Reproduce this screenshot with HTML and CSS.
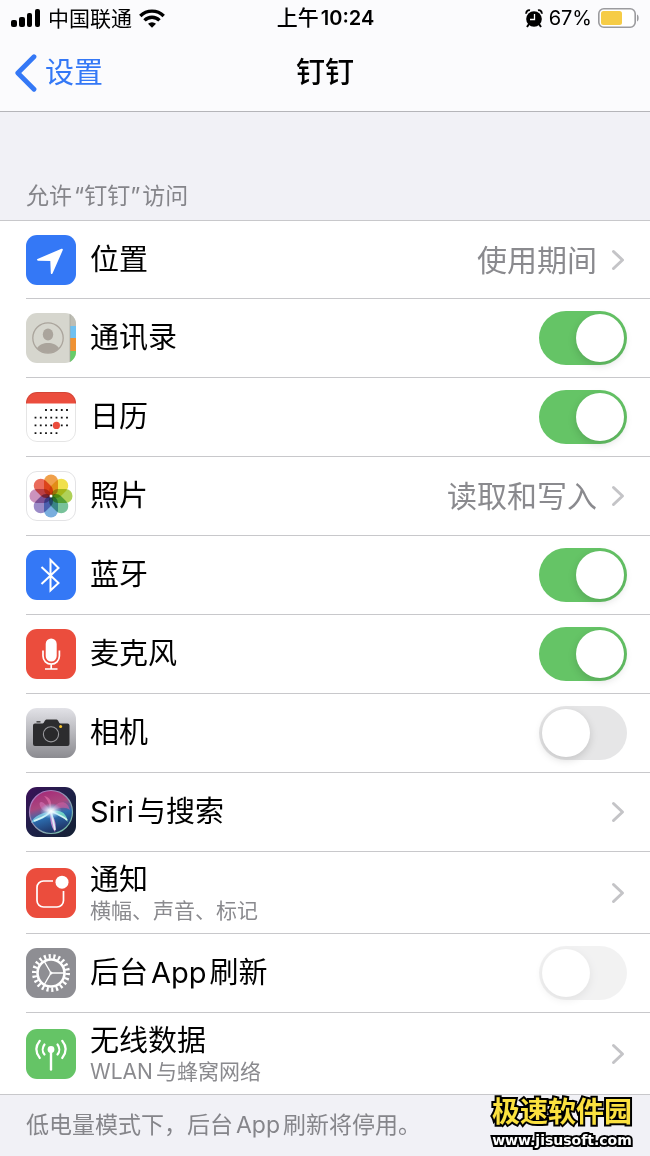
FILE: index.html
```html
<!DOCTYPE html>
<html lang="zh-CN">
<head>
<meta charset="utf-8">
<meta name="viewport" content="width=device-width, initial-scale=1">
<title>钉钉</title>
<link rel="stylesheet" href="styles.css">
</head>
<body>
<svg width="0" height="0" class="defs" aria-hidden="true">
  <defs>
    <clipPath id="tile"><rect width="50" height="50" rx="11"/></clipPath>
    <linearGradient id="silver" x1="0" y1="0" x2="0" y2="1"><stop offset="0" stop-color="#e2e2e7"/><stop offset="1" stop-color="#8b8b90"/></linearGradient>
    <linearGradient id="night" x1="0" y1="0" x2="1" y2="1"><stop offset="0" stop-color="#3b1058"/><stop offset=".5" stop-color="#1d2148"/><stop offset="1" stop-color="#142033"/></linearGradient>
    <linearGradient id="orb" x1=".3" y1="0" x2=".6" y2="1"><stop offset="0" stop-color="#a52a78"/><stop offset=".35" stop-color="#a9487f"/><stop offset=".6" stop-color="#2c6db0"/><stop offset="1" stop-color="#1d2c5c"/></linearGradient>
    <linearGradient id="rim" x1="0" y1="0" x2="1" y2="1"><stop offset="0" stop-color="#b66bc4"/><stop offset="1" stop-color="#6bc6a4"/></linearGradient>
    <radialGradient id="glow"><stop offset="0" stop-color="#fff"/><stop offset=".3" stop-color="#e8f6ff" stop-opacity=".85"/><stop offset="1" stop-color="#7fd0ff" stop-opacity="0"/></radialGradient>
    <symbol id="chevron" viewBox="0 0 16 22"><path d="M2.5 2.500 11.500 11 2.500 19.500" fill="none" stroke="currentColor" stroke-width="3" stroke-linecap="round" stroke-linejoin="round"/></symbol>
  </defs>
</svg>

<header class="top">
  <div class="status">
    <div class="status-left">
      <svg width="30" height="18" viewBox="0 0 30 18" aria-hidden="true"><rect x="0" y="11" width="6" height="7" rx="2"/><rect x="8" y="8" width="6" height="10" rx="2"/><rect x="16" y="4" width="5" height="14" rx="2"/><rect x="24" y="0" width="5" height="18" rx="2"/></svg>
      <span class="carrier">中国联通</span>
      <svg width="26" height="19" viewBox="0 0 26 19" aria-hidden="true"><g fill="none" stroke="#000" stroke-width="3.400"><path d="M1.300 7a16.500 16.500 0 0 1 23.400 0"/><path d="M5.500 11.400a10.600 10.600 0 0 1 15 0"/></g><path d="M9 14.800a5.700 5.700 0 0 1 8 0L13 18.700z"/></svg>
    </div>
    <div class="clock">上午<span class="time">10:24</span></div>
    <div class="status-right">
      <svg width="18" height="19" viewBox="0 0 18 19" aria-hidden="true"><circle cx="9" cy="10" r="7.800"/><path d="M1.300 4.800a3 3 0 0 1 3.700-3.500M16.700 4.800a3 3 0 0 0-3.700-3.500" stroke="#000" stroke-width="1.800" fill="none"/><path d="M4 15l-2 3M14 15l2 3" stroke="#000" stroke-width="2"/><path d="M9.500 5v5.500H5" stroke="#fff" stroke-width="1.300" fill="none"/></svg>
      <span class="percent">67%</span>
      <svg width="42" height="20" viewBox="0 0 42 20" aria-hidden="true"><rect x=".8" y=".8" width="36.400" height="18.400" rx="5" fill="#fff" stroke="#9b9b9e" stroke-width="1.600"/><rect x="3" y="3" width="21" height="14" rx="2.500" fill="#f6cc46"/><path d="M39 6.500c2.200.8 2.200 6.200 0 7z" fill="#9b9b9e"/></svg>
    </div>
  </div>
  <nav class="nav">
    <a class="back" href="#settings"><svg width="22" height="38" viewBox="0 0 22 38" aria-hidden="true"><path d="M19 2.700 2.800 19 19 35.300" fill="none" stroke="currentColor" stroke-width="4.800" stroke-linecap="round" stroke-linejoin="round"/></svg>设置</a>
    <h1 class="title">钉钉</h1>
  </nav>
</header>

<main>
  <h2 class="caption">允许<span class="quoted">“钉钉”</span>访问</h2>
  <ul class="list">
    <li class="item">
      <svg class="icon" viewBox="0 0 50 50" aria-hidden="true"><rect width="50" height="50" rx="11" fill="#3478f6"/><path d="M11.500 24 35.500 13.700q1.800-.4 1.200 1.500L26.500 38.500q-1.400 1.400-1.700-.6L24.300 26 12 25.700q-1.700-.8-.5-1.700z" fill="#fff"/></svg>
      <a class="row" href="#location"><span class="label">位置</span><span class="value">使用期间</span><svg class="chevron" aria-hidden="true"><use href="#chevron"/></svg></a>
    </li>
    <li class="item">
      <svg class="icon" viewBox="0 0 50 50" aria-hidden="true"><g clip-path="url(#tile)"><path d="M0 0h50v50H0z" fill="#d6d6ce"/><path d="M44 0h6v13h-6z" fill="#bdbdb4"/><path d="M44 13h6v12h-6z" fill="#6fc0f0"/><path d="M44 25h6v13h-6z" fill="#ef9234"/><path d="M44 38h6v12h-6z" fill="#66cc68"/><path d="M44 0v50" stroke="#a5a59c" stroke-width=".7"/></g><circle cx="22" cy="25" r="15.200" fill="none" stroke="#aaa49c" stroke-width="1.300"/><ellipse cx="22" cy="21.500" rx="5.200" ry="6" fill="#aaa49c"/><path d="M11 35.200c4-7 18-7 22 0a15 15 0 0 1-22 0z" fill="#aaa49c"/></svg>
      <label class="row"><span class="label">通讯录</span><input class="switch" type="checkbox" checked></label>
    </li>
    <li class="item">
      <svg class="icon" viewBox="0 0 50 50" aria-hidden="true"><g clip-path="url(#tile)"><path d="M0 0h50v50H0z" fill="#fff"/><path d="M0 0h50v11.500H0z" fill="#eb4d3d"/></g><rect x=".5" y=".5" width="49" height="49" rx="10.500" fill="none" stroke="#000" stroke-opacity=".1"/><path d="M19.100 18h23M8.600 25.700h34M8.600 33.400h34M8.600 41.200h23.500" stroke="#111" stroke-width="1.800" stroke-dasharray="1.800 3.450"/><circle cx="30.400" cy="33.400" r="3.600" fill="#eb4d3d"/></svg>
      <label class="row"><span class="label">日历</span><input class="switch" type="checkbox" checked></label>
    </li>
    <li class="item">
      <svg class="icon" viewBox="0 0 50 50" aria-hidden="true"><rect x=".5" y=".5" width="49" height="49" rx="10.500" fill="#fff" stroke="#e3e3e5"/><g class="petals"><rect x="18" y="3.500" width="14" height="21.500" rx="7" fill="#f0a04b"/><rect x="18" y="3.500" width="14" height="21.500" rx="7" fill="#f0e04c" transform="rotate(45 25 25)"/><rect x="18" y="3.500" width="14" height="21.500" rx="7" fill="#afd158" transform="rotate(90 25 25)"/><rect x="18" y="3.500" width="14" height="21.500" rx="7" fill="#78c29a" transform="rotate(135 25 25)"/><rect x="18" y="3.500" width="14" height="21.500" rx="7" fill="#79aede" transform="rotate(180 25 25)"/><rect x="18" y="3.500" width="14" height="21.500" rx="7" fill="#9b8bc7" transform="rotate(225 25 25)"/><rect x="18" y="3.500" width="14" height="21.500" rx="7" fill="#cb93bd" transform="rotate(270 25 25)"/><rect x="18" y="3.500" width="14" height="21.500" rx="7" fill="#ea6c5c" transform="rotate(315 25 25)"/></g><circle cx="25" cy="25" r="1.500" fill="#fff"/></svg>
      <a class="row" href="#photos"><span class="label">照片</span><span class="value">读取和写入</span><svg class="chevron" aria-hidden="true"><use href="#chevron"/></svg></a>
    </li>
    <li class="item">
      <svg class="icon" viewBox="0 0 50 50" aria-hidden="true"><rect width="50" height="50" rx="11" fill="#3478f6"/><path d="M15.500 17 32.500 33 24.500 40.500V10L32.500 18 15.500 34" fill="none" stroke="#fff" stroke-width="2"/></svg>
      <label class="row"><span class="label">蓝牙</span><input class="switch" type="checkbox" checked></label>
    </li>
    <li class="item">
      <svg class="icon" viewBox="0 0 50 50" aria-hidden="true"><rect width="50" height="50" rx="11" fill="#eb4d3d"/><rect x="19.700" y="9.500" width="11" height="23" rx="5.500" fill="#fff"/><path d="M17 21.500V27a8.200 8.200 0 0 0 16.400 0v-5.500M25.200 35v5M19 40h12.500" fill="none" stroke="#fff" stroke-width="1.700"/></svg>
      <label class="row"><span class="label">麦克风</span><input class="switch" type="checkbox" checked></label>
    </li>
    <li class="item">
      <svg class="icon" viewBox="0 0 50 50" aria-hidden="true"><rect width="50" height="50" rx="11" fill="url(#silver)"/><path d="M10.500 14.500V13.200h4v1.300z" fill="#2c2c2e"/><path d="M9 15.500h7.500c1.800 0 2-4 4-4h10c2 0 2.200 4 4 4h7a2 2 0 0 1 2 2V36a2 2 0 0 1-2 2H9a2 2 0 0 1-2-2V17.500a2 2 0 0 1 2-2z" fill="#2c2c2e"/><circle cx="25" cy="26.300" r="7.600" fill="#29292b" stroke="#99999d" stroke-width="1.100"/><circle cx="34.600" cy="18.600" r="1.500" fill="#f5c32c"/></svg>
      <label class="row"><span class="label">相机</span><input class="switch" type="checkbox"></label>
    </li>
    <li class="item">
      <svg class="icon" viewBox="0 0 50 50" aria-hidden="true"><rect width="50" height="50" rx="11" fill="url(#night)"/><circle cx="25" cy="25" r="21.500" fill="url(#orb)" stroke="url(#rim)" stroke-width="1.200"/><path d="M24 24C17 12 12 14 14 19s6 6 10 5z" fill="#d675b8" opacity=".6"/><path d="M25 24C31 13 41 12 44 23c-5-4-12-2-19 1z" fill="#d85fa0" opacity=".6"/><path d="M25 25c7-3 15-1 17 10-4-5-10-8-17-10z" fill="#7be3c8" opacity=".85"/><path d="M25 25C16 25 8 29 5 36c8-3 16-5 20-11z" fill="#8be6f2" opacity=".7"/><path d="M24 25c0 8 1 15 5 20 2-7 0-14-5-20z" fill="#e89be1" opacity=".8"/><path d="M24 24c0-7-3-12-6-15 6 1 9 6 6 15z" fill="#eb76af" opacity=".6"/><path d="M8 34c7-3 12-4 17-10 5 3 12 5 16 9M25 24l4 19" fill="none" stroke="#e4fffb" stroke-width="1.800" opacity=".85"/><ellipse cx="25" cy="24" rx="11" ry="8" fill="url(#glow)"/></svg>
      <a class="row" href="#siri"><span class="label">Siri<span class="cjk">与搜索</span></span><svg class="chevron" aria-hidden="true"><use href="#chevron"/></svg></a>
    </li>
    <li class="item item-tall">
      <svg class="icon" viewBox="0 0 50 50" aria-hidden="true"><rect width="50" height="50" rx="11" fill="#eb4d3d"/><path d="M27 13H17.500a6.500 6.500 0 0 0-6.500 6.500v13a6.500 6.500 0 0 0 6.500 6.500H31a6.500 6.500 0 0 0 6.500-6.500V23" fill="none" stroke="#fff" stroke-width="1.700"/><circle cx="36" cy="14.200" r="6.500" fill="#fff"/></svg>
      <a class="row" href="#notifications"><span class="label">通知<small class="detail">横幅、声音、标记</small></span><svg class="chevron" aria-hidden="true"><use href="#chevron"/></svg></a>
    </li>
    <li class="item">
      <svg class="icon" viewBox="0 0 50 50" aria-hidden="true"><rect width="50" height="50" rx="11" fill="#8e8e93"/><g fill="none" stroke="#fff"><circle cx="25" cy="25" r="13.500" stroke-width="2.600"/><circle cx="25" cy="25" r="16.700" stroke-width="4.600" pathLength="44" stroke-dasharray=".9 1.100"/><path d="M25 25h13M25 25l-6.700-11.500M25 25l-6.700 11.500" stroke-width="1.400"/></g><circle cx="25" cy="25" r="1.500" fill="#fff"/></svg>
      <label class="row"><span class="label">后台<span class="latin">App</span>刷新</span><input class="switch" type="checkbox" disabled></label>
    </li>
    <li class="item item-tall">
      <svg class="icon" viewBox="0 0 50 50" aria-hidden="true"><rect width="50" height="50" rx="11" fill="#65c466"/><g fill="none" stroke="#fff" stroke-width="2.200" stroke-linecap="round"><path d="M25 21v19.500" stroke-width="2.400"/><path d="M18.500 15.500a8 8 0 0 0 0 10M31.500 15.500a8 8 0 0 1 0 10M13.800 11.800q-7 8.600 0 17.200M36.200 11.800q7 8.600 0 17.200"/></g><circle cx="25" cy="20.500" r="3.400" fill="#fff"/></svg>
      <a class="row" href="#data"><span class="label">无线数据<small class="detail">WLAN<span class="cjk">与蜂窝网络</span></small></span><svg class="chevron" aria-hidden="true"><use href="#chevron"/></svg></a>
    </li>
  </ul>
  <p class="note">低电量模式下，后台<span class="latin">App</span>刷新将停用。</p>
</main>

<div class="watermark"><span class="mark-name">极速软件园</span><span class="mark-url">www.jisusoft.com</span></div>
</body>
</html>
```

FILE: styles.css
```css
* { box-sizing: border-box; }

body {
  position: relative;
  min-height: 100vh;
  margin: 0;
  background: #f1f1f6;
  color: #000;
  font-family: Inter, "Noto Sans CJK SC", sans-serif;
  font-size: 29px;
  line-height: 36px;
}

.defs { position: absolute; }

.top {
  background: #fbfbfd;
  border-bottom: 1px solid #b5b5b9;
}

.status {
  display: grid;
  grid-template-columns: 1fr auto 1fr;
  align-items: center;
  height: 35px;
  padding: 0 10px 0 11px;
  font-size: 21px;
  line-height: 35px;
}

.status-left,
.status-right {
  display: flex;
  align-items: center;
  gap: 7px;
}

.status-right {
  justify-content: flex-end;
  gap: 6px;
}

.percent { font-size: 20px; }

.clock { font-weight: 500; }

.time {
  margin-left: 2px;
  font-size: 20px;
  font-weight: 600;
}

.nav {
  display: grid;
  grid-template-columns: 1fr auto 1fr;
  align-items: center;
  height: 76px;
  padding: 0 15px;
}

.back {
  display: flex;
  align-items: center;
  gap: 8px;
  color: #3478f6;
  text-decoration: none;
}

.title {
  margin: 0;
  font-size: 29px;
  font-weight: 500;
}

.caption {
  margin: 0;
  padding: 69px 26px 9px;
  color: #85858a;
  font-size: 23px;
  font-weight: 400;
  line-height: 30px;
}

.quoted { margin: 0 2px; }

.list {
  margin: 0;
  padding: 0;
  background: #fff;
  border: solid #c8c8cb;
  border-width: 1px 0;
  list-style: none;
}

.item {
  display: flex;
  align-items: center;
  gap: 14px;
  min-height: 79px;
  margin-left: 26px;
  border-bottom: 1px solid #c8c8cb;
}

.item:first-child { min-height: 78px; }
.item-tall { min-height: 82px; }

.item:last-child {
  min-height: 81px;
  border-bottom: 0;
}

.icon {
  flex: none;
  width: 50px;
  height: 50px;
}

.petals rect { mix-blend-mode: multiply; }

.row {
  display: flex;
  flex: 1;
  align-items: center;
  padding-right: 23px;
  color: inherit;
  text-decoration: none;
}

.label { flex: 1; }

.cjk { margin-left: 3px; }
.latin { margin: 0 3px; }

.detail {
  display: block;
  color: #8a8a8e;
  font-size: 21px;
  line-height: 26px;
}

.value {
  margin-right: 14px;
  color: #8a8a8e;
  font-size: 30px;
}

.chevron {
  flex: none;
  width: 16px;
  height: 22px;
  color: #c4c4c7;
}

.switch {
  flex: none;
  width: 88px;
  height: 54px;
  margin: 0;
  padding: 3px;
  border-radius: 27px;
  background: #e6e6e7;
  appearance: none;
}

.switch::before {
  display: block;
  width: 48px;
  height: 48px;
  border-radius: 50%;
  background: #fff;
  box-shadow: 0 3px 8px rgba(0, 0, 0, 0.15);
  content: "";
}

.switch:checked { background: #65c466; }
.switch:checked::before { margin-left: auto; }
.switch:disabled { opacity: 0.5; }

.note {
  margin: 0;
  padding: 15px 26px;
  color: #85858a;
  font-size: 23px;
  line-height: 30px;
}

.watermark {
  position: absolute;
  right: 18px;
  bottom: 6px;
  display: flex;
  flex-direction: column;
  align-items: center;
  -webkit-text-stroke: 4px #000;
  paint-order: stroke fill;
}

.mark-name {
  color: #fbe13f;
  font-size: 28px;
  font-weight: 700;
  line-height: 36px;
}

.mark-url {
  color: #fff;
  font-family: "DejaVu Sans", sans-serif;
  font-size: 14px;
  font-weight: 700;
  line-height: 20px;
}
```
